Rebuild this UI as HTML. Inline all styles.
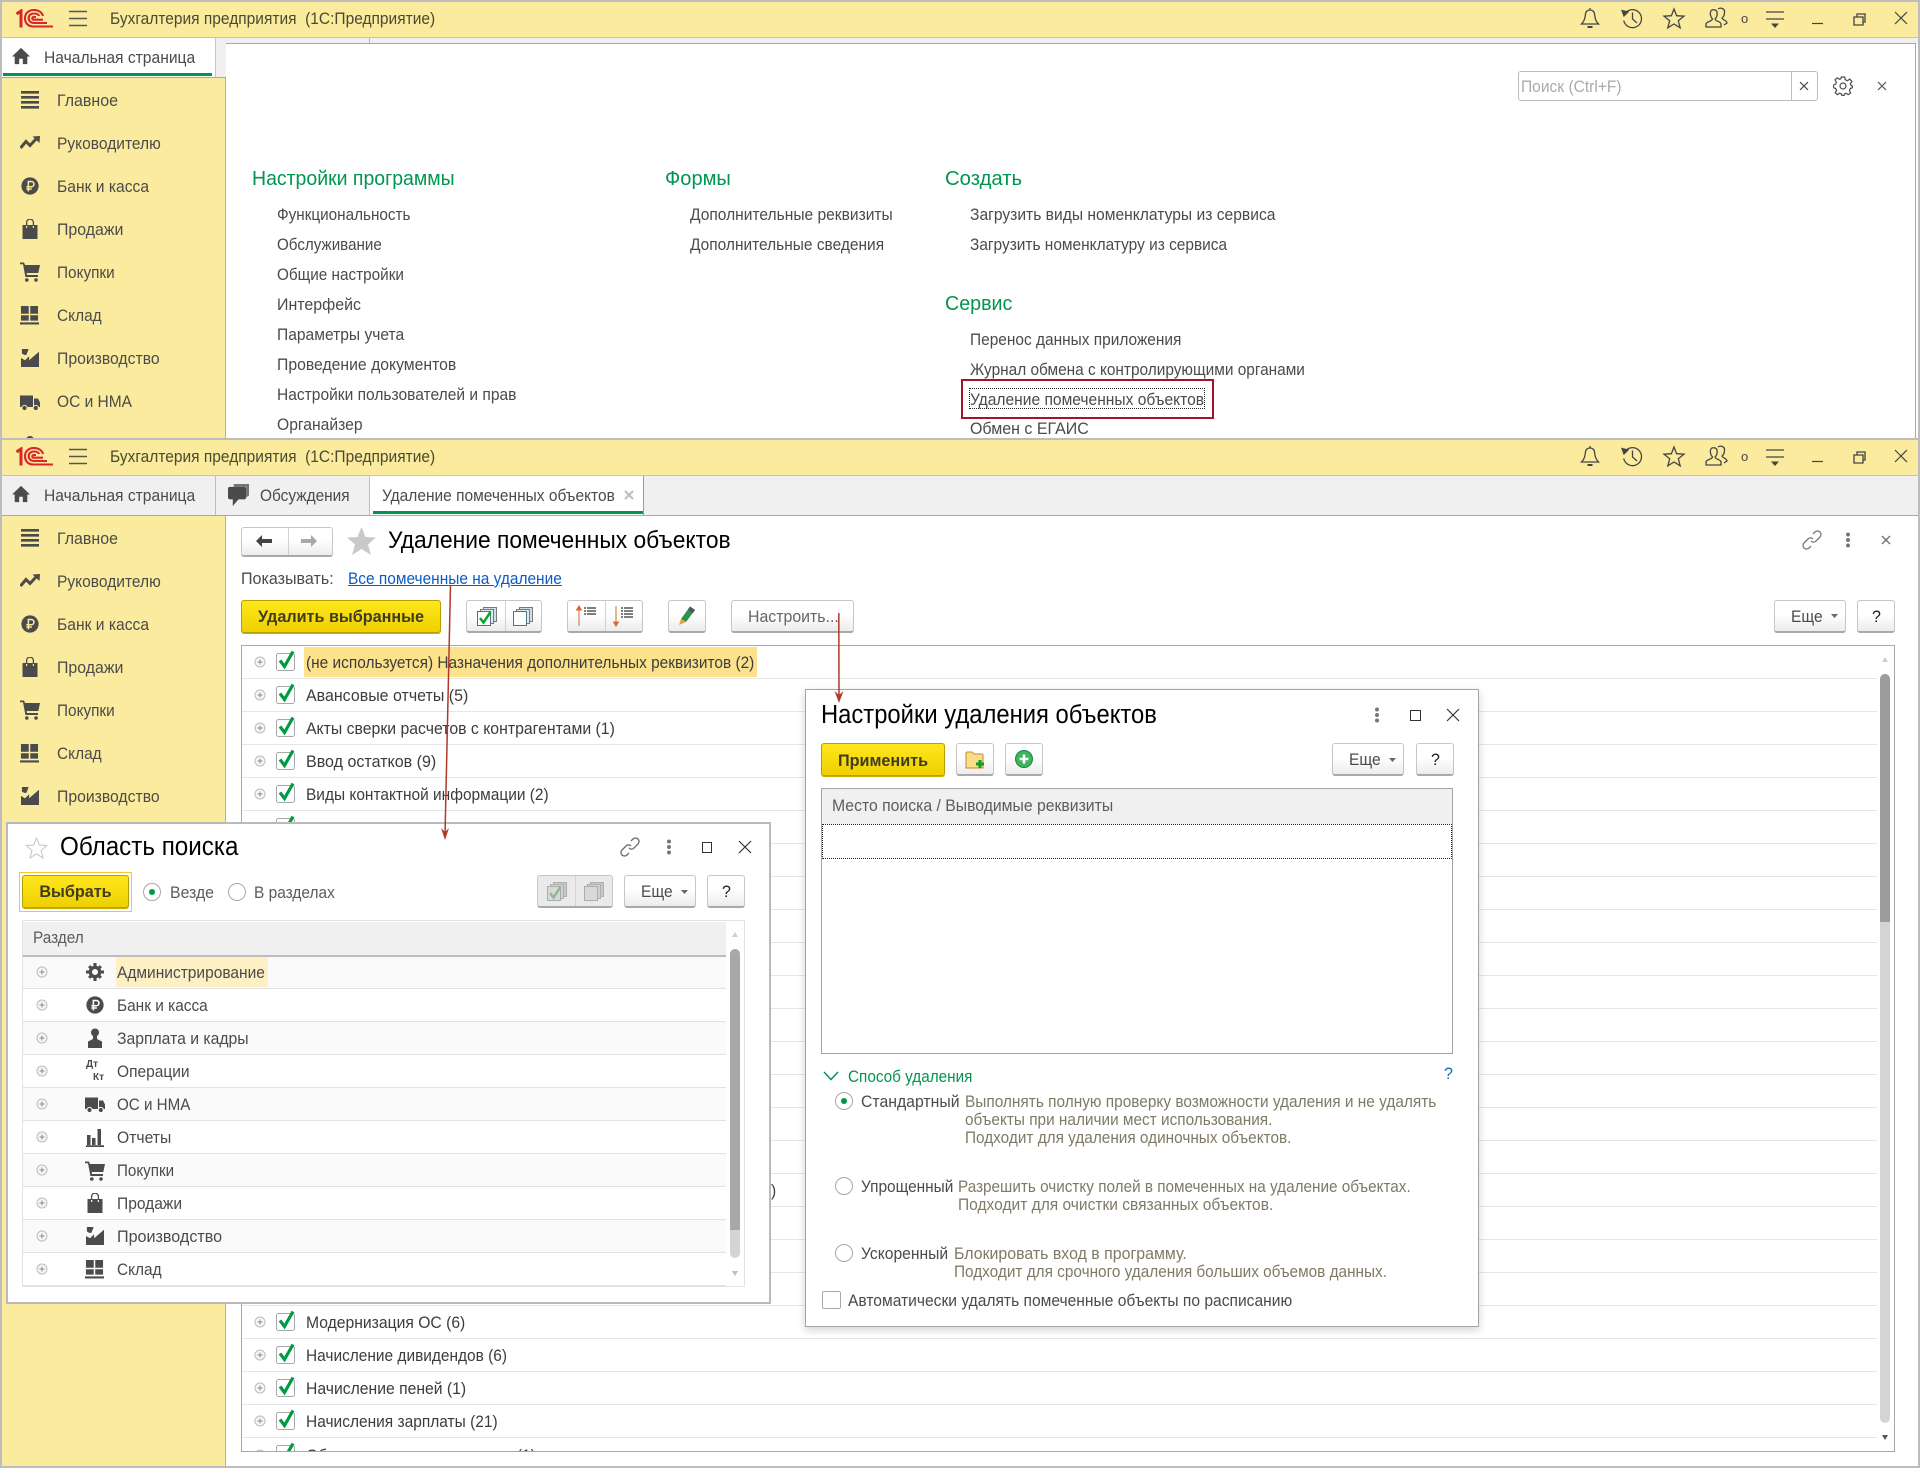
<!DOCTYPE html>
<html lang="ru"><head><meta charset="utf-8"><title>Удаление помеченных объектов</title>
<style>
*{box-sizing:border-box}
html,body{margin:0;padding:0;background:#fff}
body{width:1920px;height:1482px;position:relative;overflow:hidden;font-family:"Liberation Sans",Arial,sans-serif}
.a{position:absolute}
.t{position:absolute;white-space:nowrap;line-height:20px;font-size:16.5px;color:#4b4b4b;margin-top:1px;transform:scaleX(var(--k,.943));transform-origin:left center}
.r{color:#3c3c3c}
.h{font-size:20.5px;line-height:24px;color:#00964f;margin-top:1px;--k:.95}
.ttl{font-size:25.5px;line-height:30px;color:#000;margin-top:0;--k:.94}
.d{color:#7f7a66}
.l{margin-top:0}
.i{position:absolute;width:20px;height:20px;color:#4b4b4b;fill:currentColor}
.b{position:absolute;border:1px solid #c6c6c6;border-bottom:2px solid #a9a9a9;border-radius:3px;background:linear-gradient(#fff 45%,#ececec)}
.y{position:absolute;border:1px solid #b4a000;border-radius:3px;background:linear-gradient(#ffe71c,#efd000);box-shadow:0 1px 0 #c9b000}
.yt{position:absolute;width:100%;text-align:center;font-weight:bold;font-size:16.2px;line-height:20px;color:#403c20;white-space:nowrap}
.bar{position:absolute;left:2px;right:2px;height:36px;background:#fbeb9e;border-bottom:1px solid #d5c878}
.rad{position:absolute;width:18px;height:18px;border:1px solid #a8a8a8;border-radius:50%;background:#fff}
.rad.on:after{content:"";position:absolute;left:5px;top:5px;width:6px;height:6px;border-radius:50%;background:#00964f}
.ln{position:absolute;height:1px;background:#e6e6e6}
</style></head><body>

<svg width="0" height="0" style="position:absolute">
<defs>
<symbol id="logo" viewBox="0 0 38 19"><g fill="none" stroke="#d9262c" stroke-width="2.1"><path d="M1.500 5 L6 2 V18.500" stroke-width="3"/><path d="M28 7 C27 3 23 1 19 1 C13 1 10 5 10 9 C10 14 13 17.500 18 17.500 H38"/><path d="M24 7 C23.500 5 21.500 4.500 19 4.500 C15.500 4.500 13.700 6.500 13.700 9 C13.700 12 16 14 19 14 H32"/><path d="M21 8 H19 C18 8 17.300 8.500 17.300 9.500 C17.300 10.300 18 10.700 19 10.700 H28"/></g></symbol>
<symbol id="home" viewBox="0 0 20 20"><path d="M10 1 L20 10.500 H17 V19 H12 V13 H8 V19 H3 V10.500 H0Z"/></symbol>
<symbol id="chat" viewBox="0 0 22 24"><path d="M6 0 H22 V12 L19 14 V3 H6Z" opacity=".75"/><path d="M2 3 H17 Q19 3 19 5 V14 Q19 16 17 16 H11 L5 23 V16 H2 Q0 16 0 14 V5 Q0 3 2 3Z"/></symbol>
<symbol id="list" viewBox="0 0 20 20"><path d="M1 1h18v2.600H1zM1 6h18v2.600H1zM1 11h18v2.600H1zM1 16h18v2.600H1z"/></symbol>
<symbol id="trend" viewBox="0 0 20 20"><path d="M0.500 15 L6 8.500 L10 12.500 L16 6" fill="none" stroke="currentColor" stroke-width="3"/><path d="M12.500 3.500 L20 3 L19.500 10Z"/></symbol>
<symbol id="rub" viewBox="0 0 20 20"><circle cx="10" cy="10" r="9.600"/><path d="M8.200 16 V5 H11.500 A2.900 2.900 0 0 1 11.500 10.800 H6 M6 13.300 H12" fill="none" stroke="#fbeb9e" stroke-width="1.700"/></symbol>
<symbol id="rubw" viewBox="0 0 20 20"><circle cx="10" cy="10" r="9.600"/><path d="M8.200 16 V5 H11.500 A2.900 2.900 0 0 1 11.500 10.800 H6 M6 13.300 H12" fill="none" stroke="#fff" stroke-width="1.700"/></symbol>
<symbol id="bag" viewBox="0 0 20 20"><path d="M2.500 6 H6 V9 H7.200 V6 H12.800 V9 H14 V6 H17.500 V20 H2.500Z"/><path d="M6.600 7 V3.500 A3.400 3.400 0 0 1 13.400 3.500 V7" fill="none" stroke="currentColor" stroke-width="1.300"/></symbol>
<symbol id="cart" viewBox="0 0 20 20"><path d="M0 0.500 H4 L5 3 H20 L18.300 11 H6.700 L7 13 H18 V15 H5.400 L3 2.200 H0Z"/><circle cx="6.800" cy="18" r="1.800"/><circle cx="16" cy="18" r="1.800"/></symbol>
<symbol id="wh" viewBox="0 0 20 20"><path d="M1 0h8.200v8.200H1zM10.800 0H19v8.200h-8.200zM1 9.800h8.200v5.600H1zM10.800 9.800H19v5.600h-8.200zM0 17.300h20V19.500H0z"/></symbol>
<symbol id="fact" viewBox="0 0 20 20"><path d="M1 0h7.500L6 6.500H3.500L1 5zM0 20V10L4.500 12.500 9 8v4.500L20 3v17z"/></symbol>
<symbol id="truck" viewBox="0 0 20 20"><path d="M0 3.500H13V15H0ZM14 6.500H18L20 10.500V15H14Z"/><circle cx="4.500" cy="16" r="2.600" stroke="#fbeb9e"/><circle cx="15.800" cy="16" r="2.600" stroke="#fbeb9e"/></symbol>
<symbol id="truckw" viewBox="0 0 20 20"><path d="M0 3.500H13V15H0ZM14 6.500H18L20 10.500V15H14Z"/><circle cx="4.500" cy="16" r="2.600" stroke="#fff"/><circle cx="15.800" cy="16" r="2.600" stroke="#fff"/></symbol>
<symbol id="gear" viewBox="0 0 20 20"><circle cx="10" cy="10" r="5.200" fill="none" stroke="currentColor" stroke-width="3.600"/><path d="M8.300 0h3.400v4H8.300zM8.300 16h3.400v4H8.300zM0 8.300h4v3.400H0zM16 8.300h4v3.400h-4zM2.300 4.700 4.700 2.300l2.600 2.600-2.400 2.400zM15.300 2.300l2.400 2.400-2.600 2.600-2.400-2.400zM2.300 15.300l2.600-2.600 2.400 2.400-2.600 2.600zM15.100 12.700l2.600 2.600-2.400 2.400-2.600-2.600z"/></symbol>
<symbol id="user" viewBox="0 0 20 20"><circle cx="10" cy="4.500" r="4"/><path d="M8 8H12V11L17 13.500V20H3V13.500L8 11Z"/></symbol>
<symbol id="rep" viewBox="0 0 20 20"><path d="M2 8h3.500v10H2zM7 11h3.500v7H7zM12.500 2H16v16h-3.500zM1 18.200h18V20H1z"/></symbol>
<symbol id="plus" viewBox="0 0 12 12"><circle cx="6" cy="6" r="5" fill="#f6f6f6" stroke="#bcbcbc"/><path d="M3.500 6h5M6 3.500v5" stroke="#8c8c8c" stroke-width="1"/></symbol>
<symbol id="chk" viewBox="0 0 20 24"><rect x="0.500" y="5.500" width="18" height="17" rx="2" fill="#fff" stroke="#a8a8a8"/><path d="M4 12.500 L8.500 18.500 L17 3.500" fill="none" stroke="#009a44" stroke-width="3.200"/></symbol>
<symbol id="tb" viewBox="0 0 340 36">
 <g fill="none" stroke="#444" stroke-width="1.300">
  <path d="M15 10 C11.500 10 10.500 12.500 10.300 15 C10 19.500 8.500 22 6.500 24 H23.500 C21.500 22 20 19.500 19.700 15 C19.500 12.500 18.500 10 15 10Z M15 8 V10"/>
  <path d="M12.500 27 H17.500" stroke-width="2"/>
  <path d="M50.500 13 A9 9 0 1 1 48.700 20.500 M57.500 12.500 V19 L62 23"/>
  <path d="M47 10.500 L49 16 L53 12Z" fill="#444"/>
  <path d="M99 9 L101.600 15.700 L109 16.200 L103.300 20.800 L105.200 27.800 L99 24 L92.800 27.800 L94.700 20.800 L89 16.200 L96.400 15.700Z"/>
  <g transform="translate(0,1)">
  <path d="M131 26 V23 C131 20.500 137 20.500 137.500 18 C135.500 16 135 13 135.500 11 C136 8 141 8 142 11 C142.500 13 142 16.500 140 18 C140.500 20.500 146 20.500 146 23 V26Z"/>
  <path d="M143 8 C146 6 150 8 149.500 11 C149.500 14 148.500 16 147 17 C147.500 19 152 19.500 152 22 L149 24"/>
  </g>
  <path d="M191 12 H209 M191 19 H209"/>
  <path d="M237 23.500 H248" stroke-width="1.200"/>
  <path d="M279 17 H288 V25 H279Z M282 17 V14 H290 V22 H288"/>
  <path d="M320 12 L332 24 M332 12 L320 24" stroke-width="1.200"/>
 </g>
 <path d="M196 23.500 H204 L200 28Z" fill="#444"/>
</symbol>
<symbol id="ck" viewBox="0 0 26 28"><rect x="9.500" y="1.500" width="13" height="14" fill="#cfdde5" stroke="#7a7a7a"/><rect x="6.500" y="3.500" width="13" height="14" fill="#dfe9ef" stroke="#7a7a7a"/><rect x="3.500" y="5.500" width="13" height="14" fill="#fff" stroke="#4f7385"/></symbol>
<symbol id="ckd" viewBox="0 0 26 28"><rect x="9.500" y="1.500" width="13" height="14" fill="#c6c9ca" stroke="#b0b0b0"/><rect x="6.500" y="3.500" width="13" height="14" fill="#cfd2d3" stroke="#b0b0b0"/><rect x="3.500" y="5.500" width="13" height="14" fill="#d8dada" stroke="#a8aeb0"/></symbol>
<symbol id="link" viewBox="0 0 20 20"><g fill="none" stroke="currentColor" stroke-width="1.300"><path d="M11 4 L13 2 A3.500 3.500 0 0 1 18 7 L13.500 11.500 A3.500 3.500 0 0 1 9 11"/><path d="M9 16 L7 18 A3.500 3.500 0 0 1 2 13 L6.500 8.500 A3.500 3.500 0 0 1 11 9"/></g></symbol>
</defs>
</svg>

<!-- window 1 -->
<div class="a" style="left:0;top:0;width:1920px;height:438px;overflow:hidden">
 <div class="a" style="left:0;top:0;width:1920px;height:2px;background:#bdbdbd"></div>
 <div class="a" style="left:0;top:0;width:2px;height:438px;background:#bdbdbd"></div>
 <div class="a" style="left:1918px;top:0;width:2px;height:438px;background:#bdbdbd"></div>
 <div class="bar" style="top:2px"></div>
 <svg class="a" style="left:15px;top:9px" width="38" height="19"><use href="#logo"/></svg>
 <svg class="a" style="left:69px;top:10px" width="18" height="17"><path d="M0 1.500H18M0 8.500H18M0 15.500H18" stroke="#555" stroke-width="1.400"/></svg>
 <div class="t" style="left:110px;top:8px;color:#4a4a30;--k:.94">Бухгалтерия предприятия&nbsp; (1С:Предприятие)</div>
 <svg class="a" style="left:1575px;top:0" width="340" height="36"><use href="#tb"/></svg>
 <div class="t" style="left:1741px;top:8px;font-size:13px;color:#444;--k:1">о</div>

 <div class="a" style="left:2px;top:38px;width:1916px;height:6px;background:#f0f0f0"></div>
 <div class="a" style="left:369px;top:38px;width:1px;height:6px;background:#b8b8b8"></div>
 <div class="a" style="left:2px;top:38px;width:213px;height:40px;background:#fff"></div>
 <div class="a" style="left:215px;top:38px;width:11px;height:40px;background:#f0f0f0;border-left:1px solid #c4c4c4"></div>
 <div class="a" style="left:3px;top:73px;width:209px;height:2.500px;background:#00964f"></div>
 <div class="a" style="left:2px;top:77px;width:224px;height:1px;background:#a8a8a8"></div>
 <svg class="i" style="left:12px;top:47px;width:18px;height:18px"><use href="#home"/></svg>
 <div class="t" style="left:44px;top:47px;--k:.947">Начальная страница</div>

 <div class="a" style="left:2px;top:78px;width:224px;height:360px;background:#fbeb9e;border-right:1px solid #b4b09a"></div>
 <svg class="i" style="left:20px;top:90px"><use href="#list"/></svg><div class="t" style="left:57px;top:90px;--k:.967">Главное</div>
 <svg class="i" style="left:20px;top:133px"><use href="#trend"/></svg><div class="t" style="left:57px;top:133px">Руководителю</div>
 <svg class="i" style="left:21px;top:177px;width:18px;height:18px"><use href="#rub"/></svg><div class="t" style="left:57px;top:176px;--k:.947">Банк и касса</div>
 <svg class="i" style="left:20px;top:219px"><use href="#bag"/></svg><div class="t" style="left:57px;top:219px;--k:.963">Продажи</div>
 <svg class="i" style="left:20px;top:262px"><use href="#cart"/></svg><div class="t" style="left:57px;top:262px;--k:.93">Покупки</div>
 <svg class="i" style="left:20px;top:306px;height:19px;width:19px"><use href="#wh"/></svg><div class="t" style="left:57px;top:305px;--k:.935">Склад</div>
 <svg class="i" style="left:21px;top:349px;width:18px;height:18px"><use href="#fact"/></svg><div class="t" style="left:57px;top:348px;--k:.954">Производство</div>
 <svg class="i" style="left:20px;top:392px"><use href="#truck"/></svg><div class="t" style="left:57px;top:391px;--k:.94">ОС и НМА</div>
 <svg class="i" style="left:24px;top:434px;width:12px;height:12px"><circle cx="6" cy="6" r="4"/></svg>

 <div class="a" style="left:226px;top:43px;width:1690px;height:395px;background:#fff;border-top:1.500px solid #a8a8a8;border-right:1px solid #a8a8a8"></div>
 <div class="a" style="left:1518px;top:71px;width:300px;height:30px;border:1px solid #bdbdbd;border-radius:3px;background:#fff"></div>
 <div class="a" style="left:1791px;top:71px;width:1px;height:30px;background:#bdbdbd"></div>
 <div class="t" style="left:1521px;top:76px;color:#ababab">Поиск (Ctrl+F)</div>
 <svg class="a" style="left:1799px;top:81px" width="10" height="10"><path d="M1 1L9 9M9 1L1 9" stroke="#444" stroke-width="1.200"/></svg>
 <svg class="a" style="left:1833px;top:76px" width="20" height="20"><g fill="none" stroke="#4b4b4b" stroke-width="1.200"><circle cx="10" cy="10" r="3"/><path d="M8.300 1H11.700L12.200 3.700L14.500 4.700L16.800 3.100L18.900 5.500L17.300 7.700L18.200 9.300L19.500 10.300V11.700L17.300 12.500L16.500 14.600L17.500 17L15.200 18.700L13 17.200L11.500 18L11 19.500H9L8.500 18L6.500 17.200L4.500 18.700L2.200 16.700L3.500 14.500L2.700 12.500L0.500 11.700V9L2.700 8L3.300 6.200L2 3.800L4.300 1.900L6.500 3.300L8 2.700Z"/></g></svg>
 <svg class="a" style="left:1877px;top:81px" width="10" height="10"><path d="M1 1L9 9M9 1L1 9" stroke="#555" stroke-width="1.200"/></svg>

 <div class="t h" style="left:252px;top:166px">Настройки программы</div>
 <div class="t l" style="left:277px;top:205px;--k:.926">Функциональность</div>
 <div class="t l" style="left:277px;top:235px;--k:.92">Обслуживание</div>
 <div class="t l" style="left:277px;top:265px;--k:.927">Общие настройки</div>
 <div class="t l" style="left:277px;top:295px;--k:.966">Интерфейс</div>
 <div class="t l" style="left:277px;top:325px;--k:.945">Параметры учета</div>
 <div class="t l" style="left:277px;top:355px;--k:.955">Проведение документов</div>
 <div class="t l" style="left:277px;top:385px;--k:.943">Настройки пользователей и прав</div>
 <div class="t l" style="left:277px;top:415px;--k:.95">Органайзер</div>

 <div class="t h" style="left:665px;top:166px;--k:.98">Формы</div>
 <div class="t l" style="left:690px;top:205px">Дополнительные реквизиты</div>
 <div class="t l" style="left:690px;top:235px;--k:.938">Дополнительные сведения</div>

 <div class="t h" style="left:945px;top:166px;--k:.99">Создать</div>
 <div class="t l" style="left:970px;top:205px;--k:.947">Загрузить виды номенклатуры из сервиса</div>
 <div class="t l" style="left:970px;top:235px;--k:.936">Загрузить номенклатуру из сервиса</div>
 <div class="t h" style="left:945px;top:291px;--k:.96">Сервис</div>
 <div class="t l" style="left:970px;top:330px;--k:.936">Перенос данных приложения</div>
 <div class="t l" style="left:970px;top:360px;--k:.933">Журнал обмена с контролирующими органами</div>
 <div class="t l" style="left:970px;top:390px;--k:.944">Удаление помеченных объектов</div>
 <div class="t l" style="left:970px;top:419px;--k:.969">Обмен с ЕГАИС</div>
 <div class="a" style="left:961px;top:379px;width:253px;height:40px;border:2px solid #a3142a"></div>
 <div class="a" style="left:969px;top:388px;width:236px;height:21px;border:1px dotted #222"></div>
</div>
<div class="a" style="left:0;top:438px;width:1920px;height:2px;background:#bdbdbd"></div>

<!-- window 2 -->
<div class="a" style="left:0;top:440px;width:1920px;height:1028px;overflow:hidden;background:#fff">
 <div class="a" style="left:0;top:0;width:2px;height:1028px;background:#bdbdbd"></div>
 <div class="a" style="left:1918px;top:0;width:2px;height:1028px;background:#bdbdbd"></div>
 <div class="a" style="left:0;top:1026px;width:1920px;height:2px;background:#bdbdbd"></div>
</div>
<div class="bar" style="top:440px"></div>
<svg class="a" style="left:15px;top:447px" width="38" height="19"><use href="#logo"/></svg>
<svg class="a" style="left:69px;top:448px" width="18" height="17"><path d="M0 1.500H18M0 8.500H18M0 15.500H18" stroke="#555" stroke-width="1.400"/></svg>
<div class="t" style="left:110px;top:446px;color:#4a4a30;--k:.94">Бухгалтерия предприятия&nbsp; (1С:Предприятие)</div>
<svg class="a" style="left:1575px;top:438px" width="340" height="36"><use href="#tb"/></svg>
<div class="t" style="left:1741px;top:446px;font-size:13px;color:#444;--k:1">о</div>

<div class="a" style="left:2px;top:476px;width:1916px;height:40px;background:#f0f0f0;border-bottom:1px solid #a8a8a8"></div>
<div class="a" style="left:215px;top:476px;width:1px;height:39px;background:#bdbdbd"></div>
<div class="a" style="left:369px;top:476px;width:1px;height:39px;background:#bdbdbd"></div>
<div class="a" style="left:370px;top:476px;width:273px;height:39px;background:#fff"></div>
<div class="a" style="left:643px;top:476px;width:1px;height:39px;background:#9a9a9a"></div>
<div class="a" style="left:373px;top:511px;width:270px;height:2.500px;background:#00964f"></div>
<svg class="i" style="left:12px;top:485px;width:18px;height:18px"><use href="#home"/></svg>
<div class="t" style="left:44px;top:485px;--k:.947">Начальная страница</div>
<svg class="i" style="left:228px;top:484px;width:21px;height:23px"><use href="#chat"/></svg>
<div class="t" style="left:260px;top:485px;--k:.935">Обсуждения</div>
<div class="t" style="left:382px;top:485px;--k:.939">Удаление помеченных объектов</div>
<svg class="a" style="left:624px;top:490px" width="10" height="10"><path d="M1 1L9 9M9 1L1 9" stroke="#bdbdbd" stroke-width="2"/></svg>

<div class="a" style="left:2px;top:516px;width:224px;height:950px;background:#fbeb9e;border-right:1px solid #b4b09a"></div>
<svg class="i" style="left:20px;top:528px"><use href="#list"/></svg><div class="t" style="left:57px;top:528px;--k:.967">Главное</div>
<svg class="i" style="left:20px;top:571px"><use href="#trend"/></svg><div class="t" style="left:57px;top:571px">Руководителю</div>
<svg class="i" style="left:21px;top:615px;width:18px;height:18px"><use href="#rub"/></svg><div class="t" style="left:57px;top:614px;--k:.947">Банк и касса</div>
<svg class="i" style="left:20px;top:657px"><use href="#bag"/></svg><div class="t" style="left:57px;top:657px;--k:.963">Продажи</div>
<svg class="i" style="left:20px;top:700px"><use href="#cart"/></svg><div class="t" style="left:57px;top:700px;--k:.93">Покупки</div>
<svg class="i" style="left:20px;top:744px;width:19px;height:19px"><use href="#wh"/></svg><div class="t" style="left:57px;top:743px;--k:.935">Склад</div>
<svg class="i" style="left:21px;top:787px;width:18px;height:18px"><use href="#fact"/></svg><div class="t" style="left:57px;top:786px;--k:.954">Производство</div>

<!-- main content -->
<div class="b" style="left:241px;top:527px;width:92px;height:30px"></div>
<div class="a" style="left:288px;top:528px;width:1px;height:27px;background:#d0d0d0"></div>
<svg class="a" style="left:255px;top:534px" width="18" height="14"><path d="M7 1L1 7L7 13V9H17V5H7Z" fill="#444"/></svg>
<svg class="a" style="left:300px;top:534px" width="18" height="14"><path d="M11 1L17 7L11 13V9H1V5H11Z" fill="#a8a8a8"/></svg>
<svg class="a" style="left:346px;top:526px" width="31" height="30"><path d="M15.500 1L19.500 11L30 11.500L22 18.500L25 29L15.500 23L6 29L9 18.500L1 11.500L11.500 11Z" fill="#c9c9c9"/></svg>
<div class="t ttl" style="left:388px;top:526px;font-size:24px;--k:.95">Удаление помеченных объектов</div>
<svg class="a" style="left:1802px;top:530px;color:#7a7a7a" width="20" height="20"><use href="#link"/></svg>
<svg class="a" style="left:1845px;top:532px" width="6" height="16"><circle cx="3" cy="2.500" r="2" fill="#777"/><circle cx="3" cy="8" r="2" fill="#777"/><circle cx="3" cy="13.500" r="2" fill="#777"/></svg>
<svg class="a" style="left:1881px;top:535px" width="10" height="10"><path d="M1 1L9 9M9 1L1 9" stroke="#777" stroke-width="1.500"/></svg>

<div class="t" style="left:241px;top:568px;--k:.974">Показывать:</div>
<div class="t" style="left:348px;top:568px;color:#0f5cc0;text-decoration:underline;--k:.936">Все помеченные на удаление</div>

<div class="y" style="left:241px;top:600px;width:200px;height:33px"><div class="yt" style="top:6px">Удалить выбранные</div></div>
<div class="b" style="left:466px;top:600px;width:76px;height:33px"></div>
<div class="a" style="left:505px;top:601px;width:1px;height:30px;background:#d0d0d0"></div>
<svg class="a" style="left:474px;top:606px" width="26" height="28"><use href="#ck"/><path d="M6 12L9.500 16.500L16.500 6" fill="none" stroke="#12a12e" stroke-width="2.500"/></svg>
<svg class="a" style="left:510px;top:606px" width="26" height="28"><use href="#ck"/></svg>
<div class="b" style="left:567px;top:600px;width:76px;height:33px"></div>
<div class="a" style="left:605px;top:601px;width:1px;height:30px;background:#d0d0d0"></div>
<svg class="a" style="left:576px;top:605px" width="24" height="22"><path d="M3 21V3M0.500 5L3 1L5.500 5Z" stroke="#d96a2a" fill="#d96a2a" stroke-width="1"/><path d="M8 3h12M8 6h12M8 9h12" stroke="#555" stroke-width="1.500" stroke-dasharray="2 1 9 0"/></svg>
<svg class="a" style="left:613px;top:605px" width="24" height="22"><path d="M3 1V19M0.500 17L3 21L5.500 17Z" stroke="#d96a2a" fill="#d96a2a" stroke-width="1"/><path d="M8 3h12M8 6h12M8 9h12M8 12h12" stroke="#555" stroke-width="1.500" stroke-dasharray="2 1 9 0"/></svg>
<div class="b" style="left:668px;top:600px;width:38px;height:33px"></div>
<svg class="a" style="left:678px;top:605px" width="18" height="21"><path d="M12 1.500L17 5L8 17L3 14Z" fill="#2f8f4e"/><path d="M12 1.500L17 5L15 8L10 4.500Z" fill="#555"/><path d="M3 14L8 17L1 20Z" fill="#e6a23c"/></svg>
<div class="b" style="left:731px;top:600px;width:123px;height:33px"></div>
<div class="t" style="left:748px;top:606px;color:#666;--k:.962">Настроить...</div>
<div class="b" style="left:1774px;top:600px;width:72px;height:33px"></div>
<div class="t" style="left:1791px;top:606px">Еще</div>
<svg class="a" style="left:1831px;top:614px" width="7" height="5"><path d="M0 0H7L3.500 4Z" fill="#666"/></svg>
<div class="b" style="left:1857px;top:600px;width:38px;height:33px"></div>
<div class="t" style="left:1872px;top:606px;color:#222;font-size:17px">?</div>

<!-- main table -->
<div class="a" style="left:241px;top:645px;width:1654px;height:807px;border:1px solid #a8a8a8;background:#fff"></div>
<div class="ln" style="left:242px;top:678px;width:1635px"></div>
<div class="ln" style="left:242px;top:711px;width:1635px"></div>
<div class="ln" style="left:242px;top:744px;width:1635px"></div>
<div class="ln" style="left:242px;top:777px;width:1635px"></div>
<div class="ln" style="left:242px;top:810px;width:1635px"></div>
<div class="ln" style="left:242px;top:843px;width:1635px"></div>
<div class="ln" style="left:242px;top:876px;width:1635px"></div>
<div class="ln" style="left:242px;top:909px;width:1635px"></div>
<div class="ln" style="left:242px;top:942px;width:1635px"></div>
<div class="ln" style="left:242px;top:975px;width:1635px"></div>
<div class="ln" style="left:242px;top:1008px;width:1635px"></div>
<div class="ln" style="left:242px;top:1041px;width:1635px"></div>
<div class="ln" style="left:242px;top:1074px;width:1635px"></div>
<div class="ln" style="left:242px;top:1107px;width:1635px"></div>
<div class="ln" style="left:242px;top:1140px;width:1635px"></div>
<div class="ln" style="left:242px;top:1173px;width:1635px"></div>
<div class="ln" style="left:242px;top:1206px;width:1635px"></div>
<div class="ln" style="left:242px;top:1239px;width:1635px"></div>
<div class="ln" style="left:242px;top:1272px;width:1635px"></div>
<div class="ln" style="left:242px;top:1305px;width:1635px"></div>
<div class="ln" style="left:242px;top:1338px;width:1635px"></div>
<div class="ln" style="left:242px;top:1371px;width:1635px"></div>
<div class="ln" style="left:242px;top:1404px;width:1635px"></div>
<div class="ln" style="left:242px;top:1437px;width:1635px"></div>

<div class="a" style="left:304px;top:647px;width:453px;height:30px;background:#fde28c"></div>

<svg class="a" style="left:254px;top:656px" width="12" height="12"><use href="#plus"/></svg><svg class="a" style="left:276px;top:648px" width="20" height="24"><use href="#chk"/></svg><div class="t r" style="left:306px;top:652px;--k:.935">(не используется) Назначения дополнительных реквизитов (2)</div>
<svg class="a" style="left:254px;top:689px" width="12" height="12"><use href="#plus"/></svg><svg class="a" style="left:276px;top:681px" width="20" height="24"><use href="#chk"/></svg><div class="t r" style="left:306px;top:685px;--k:.968">Авансовые отчеты (5)</div>
<svg class="a" style="left:254px;top:722px" width="12" height="12"><use href="#plus"/></svg><svg class="a" style="left:276px;top:714px" width="20" height="24"><use href="#chk"/></svg><div class="t r" style="left:306px;top:718px;--k:.958">Акты сверки расчетов с контрагентами (1)</div>
<svg class="a" style="left:254px;top:755px" width="12" height="12"><use href="#plus"/></svg><svg class="a" style="left:276px;top:747px" width="20" height="24"><use href="#chk"/></svg><div class="t r" style="left:306px;top:751px;--k:.973">Ввод остатков (9)</div>
<svg class="a" style="left:254px;top:788px" width="12" height="12"><use href="#plus"/></svg><svg class="a" style="left:276px;top:780px" width="20" height="24"><use href="#chk"/></svg><div class="t r" style="left:306px;top:784px;--k:.937">Виды контактной информации (2)</div>
<svg class="a" style="left:276px;top:813px" width="20" height="24"><use href="#chk"/></svg>
<div class="t r" style="left:771px;top:1180px">)</div>
<svg class="a" style="left:254px;top:1316px" width="12" height="12"><use href="#plus"/></svg><svg class="a" style="left:276px;top:1308px" width="20" height="24"><use href="#chk"/></svg><div class="t r" style="left:306px;top:1312px;--k:.951">Модернизация ОС (6)</div>
<svg class="a" style="left:254px;top:1349px" width="12" height="12"><use href="#plus"/></svg><svg class="a" style="left:276px;top:1341px" width="20" height="24"><use href="#chk"/></svg><div class="t r" style="left:306px;top:1345px;--k:.936">Начисление дивидендов (6)</div>
<svg class="a" style="left:254px;top:1382px" width="12" height="12"><use href="#plus"/></svg><svg class="a" style="left:276px;top:1374px" width="20" height="24"><use href="#chk"/></svg><div class="t r" style="left:306px;top:1378px;--k:.953">Начисление пеней (1)</div>
<svg class="a" style="left:254px;top:1415px" width="12" height="12"><use href="#plus"/></svg><svg class="a" style="left:276px;top:1407px" width="20" height="24"><use href="#chk"/></svg><div class="t r" style="left:306px;top:1411px;--k:.939">Начисления зарплаты (21)</div>
<div class="a" style="left:242px;top:1438px;width:400px;height:13px;overflow:hidden">
 <svg class="a" style="left:12px;top:11px" width="12" height="12"><use href="#plus"/></svg><svg class="a" style="left:34px;top:2px" width="20" height="24"><use href="#chk"/></svg><div class="t r" style="left:64px;top:7px">Обесценение номенклатуры (1)</div>
</div>

<div class="a" style="left:1880px;top:674px;width:10px;height:749px;border-radius:5px;background:#d4d4d4"></div>
<div class="a" style="left:1880px;top:674px;width:10px;height:248px;border-radius:5px 5px 0 0;background:#9c9c9c"></div>
<svg class="a" style="left:1882px;top:657px" width="6" height="5"><path d="M3 0L6 5H0Z" fill="#cfcfcf"/></svg>
<svg class="a" style="left:1882px;top:1435px" width="6" height="5"><path d="M3 5L6 0H0Z" fill="#555"/></svg>

<!-- left dialog -->
<div class="a" style="left:6px;top:822px;width:765px;height:482px;background:#fff;border:2px solid #bababa"></div>
<svg class="a" style="left:25px;top:837px" width="23" height="22"><path d="M11.500 1L14.300 8L21.800 8.500L16 13.500L18 21L11.500 16.800L5 21L7 13.500L1.200 8.500L8.700 8Z" fill="none" stroke="#c4c4c4" stroke-width="1"/></svg>
<div class="t ttl" style="left:60px;top:832px;--k:.949">Область поиска</div>
<svg class="a" style="left:620px;top:837px;color:#6a6a6a" width="20" height="20"><use href="#link"/></svg>
<svg class="a" style="left:666px;top:839px" width="6" height="16"><circle cx="3" cy="2.500" r="2" fill="#777"/><circle cx="3" cy="8" r="2" fill="#777"/><circle cx="3" cy="13.500" r="2" fill="#777"/></svg>
<div class="a" style="left:702px;top:842px;width:10px;height:11px;border:1.500px solid #333"></div>
<svg class="a" style="left:738px;top:840px" width="14" height="14"><path d="M1 1L13 13M13 1L1 13" stroke="#333" stroke-width="1.200"/></svg>
<div class="a" style="left:19px;top:872px;width:113px;height:40px;border:1px solid #f3c92a"></div>
<div class="y" style="left:22px;top:875px;width:107px;height:33px"><div class="yt" style="top:6px">Выбрать</div></div>
<div class="rad on" style="left:143px;top:883px"></div>
<div class="t" style="left:170px;top:882px;color:#5c5c5c;--k:.96">Везде</div>
<div class="rad" style="left:228px;top:883px"></div>
<div class="t" style="left:254px;top:882px;color:#5c5c5c;--k:.937">В разделах</div>
<div class="b" style="left:537px;top:875px;width:76px;height:33px;background:#eaeaea"></div>
<div class="a" style="left:575px;top:876px;width:1px;height:30px;background:#d4d4d4"></div>
<svg class="a" style="left:544px;top:881px" width="26" height="28"><use href="#ckd"/><path d="M6 12L9.500 16.500L16.500 6" fill="none" stroke="#8fb896" stroke-width="2.500"/></svg>
<svg class="a" style="left:581px;top:881px" width="26" height="28"><use href="#ckd"/></svg>
<div class="b" style="left:624px;top:875px;width:72px;height:33px"></div>
<div class="t" style="left:641px;top:881px">Еще</div>
<svg class="a" style="left:681px;top:890px" width="7" height="5"><path d="M0 0H7L3.500 4Z" fill="#666"/></svg>
<div class="b" style="left:707px;top:875px;width:38px;height:33px"></div>
<div class="t" style="left:722px;top:881px;color:#222;font-size:17px">?</div>

<div class="a" style="left:22px;top:920px;width:723px;height:367px;border:1px solid #e2e2e2"></div>
<div class="a" style="left:23px;top:922px;width:703px;height:33px;background:#f0f0f0"></div>
<div class="a" style="left:23px;top:955px;width:703px;height:1.500px;background:#bdbdbd"></div>
<div class="t" style="left:33px;top:927px;color:#5c5c5c;--k:.93">Раздел</div>
<div class="a" style="left:23px;top:957px;width:703px;height:31px;background:#fafafa"></div>
<div class="a" style="left:23px;top:1022px;width:703px;height:32px;background:#fafafa"></div>
<div class="a" style="left:23px;top:1088px;width:703px;height:32px;background:#fafafa"></div>
<div class="a" style="left:23px;top:1154px;width:703px;height:32px;background:#fafafa"></div>
<div class="a" style="left:23px;top:1220px;width:703px;height:32px;background:#fafafa"></div>
<div class="a" style="left:116px;top:957px;width:152px;height:30px;background:#fdf0c4"></div>
<div class="ln" style="left:23px;top:988px;width:703px;background:#e2e2e2"></div>
<div class="ln" style="left:23px;top:1021px;width:703px;background:#e2e2e2"></div>
<div class="ln" style="left:23px;top:1054px;width:703px;background:#e2e2e2"></div>
<div class="ln" style="left:23px;top:1087px;width:703px;background:#e2e2e2"></div>
<div class="ln" style="left:23px;top:1120px;width:703px;background:#e2e2e2"></div>
<div class="ln" style="left:23px;top:1153px;width:703px;background:#e2e2e2"></div>
<div class="ln" style="left:23px;top:1186px;width:703px;background:#e2e2e2"></div>
<div class="ln" style="left:23px;top:1219px;width:703px;background:#e2e2e2"></div>
<div class="ln" style="left:23px;top:1252px;width:703px;background:#e2e2e2"></div>
<div class="ln" style="left:23px;top:1285px;width:703px;background:#e2e2e2"></div>

<svg class="a" style="left:36px;top:966px" width="12" height="12"><use href="#plus"/></svg><svg class="i" style="left:86px;top:963px;width:18px;height:18px"><use href="#gear"/></svg><div class="t" style="left:117px;top:962px;--k:.94">Администрирование</div>
<svg class="a" style="left:36px;top:999px" width="12" height="12"><use href="#plus"/></svg><svg class="i" style="left:86px;top:996px;width:18px;height:18px"><use href="#rubw"/></svg><div class="t" style="left:117px;top:995px;--k:.934">Банк и касса</div>
<svg class="a" style="left:36px;top:1032px" width="12" height="12"><use href="#plus"/></svg><svg class="i" style="left:85px;top:1028px"><use href="#user"/></svg><div class="t" style="left:117px;top:1028px;--k:.953">Зарплата и кадры</div>
<svg class="a" style="left:36px;top:1065px" width="12" height="12"><use href="#plus"/></svg><div class="t" style="left:86px;top:1058px;font-size:10px;font-weight:bold;line-height:12px;--k:1">Дт</div><div class="t" style="left:93px;top:1071px;font-size:10px;font-weight:bold;line-height:12px;--k:1">Кт</div><div class="t" style="left:117px;top:1061px;--k:.94">Операции</div>
<svg class="a" style="left:36px;top:1098px" width="12" height="12"><use href="#plus"/></svg><svg class="i" style="left:85px;top:1094px"><use href="#truckw"/></svg><div class="t" style="left:117px;top:1094px;--k:.92">ОС и НМА</div>
<svg class="a" style="left:36px;top:1131px" width="12" height="12"><use href="#plus"/></svg><svg class="i" style="left:85px;top:1127px"><use href="#rep"/></svg><div class="t" style="left:117px;top:1127px;--k:.951">Отчеты</div>
<svg class="a" style="left:36px;top:1164px" width="12" height="12"><use href="#plus"/></svg><svg class="i" style="left:85px;top:1161px"><use href="#cart"/></svg><div class="t" style="left:117px;top:1160px;--k:.92">Покупки</div>
<svg class="a" style="left:36px;top:1197px" width="12" height="12"><use href="#plus"/></svg><svg class="i" style="left:85px;top:1193px"><use href="#bag"/></svg><div class="t" style="left:117px;top:1193px;--k:.944">Продажи</div>
<svg class="a" style="left:36px;top:1230px" width="12" height="12"><use href="#plus"/></svg><svg class="i" style="left:86px;top:1227px;width:18px;height:18px"><use href="#fact"/></svg><div class="t" style="left:117px;top:1226px;--k:.977">Производство</div>
<svg class="a" style="left:36px;top:1263px" width="12" height="12"><use href="#plus"/></svg><svg class="i" style="left:85px;top:1260px;width:19px;height:19px"><use href="#wh"/></svg><div class="t" style="left:117px;top:1259px;--k:.934">Склад</div>

<div class="a" style="left:730px;top:949px;width:10px;height:309px;border-radius:5px;background:#d4d4d4"></div>
<div class="a" style="left:730px;top:949px;width:10px;height:281px;border-radius:5px 5px 0 0;background:#a8a8a8"></div>
<svg class="a" style="left:732px;top:932px" width="6" height="5"><path d="M3 0L6 5H0Z" fill="#cfcfcf"/></svg>
<svg class="a" style="left:732px;top:1271px" width="6" height="5"><path d="M3 5L6 0H0Z" fill="#bdbdbd"/></svg>

<!-- right dialog -->
<div class="a" style="left:805px;top:689px;width:674px;height:638px;background:#fff;border:1px solid #a4a4a4;box-shadow:0 3px 8px rgba(0,0,0,.18)"></div>
<div class="t ttl" style="left:821px;top:700px;--k:.933">Настройки удаления объектов</div>
<svg class="a" style="left:1374px;top:707px" width="6" height="16"><circle cx="3" cy="2.500" r="2" fill="#777"/><circle cx="3" cy="8" r="2" fill="#777"/><circle cx="3" cy="13.500" r="2" fill="#777"/></svg>
<div class="a" style="left:1410px;top:710px;width:11px;height:11px;border:1.500px solid #333"></div>
<svg class="a" style="left:1446px;top:708px" width="14" height="14"><path d="M1 1L13 13M13 1L1 13" stroke="#333" stroke-width="1.200"/></svg>
<div class="y" style="left:821px;top:743px;width:124px;height:33px"><div class="yt" style="top:6.500px">Применить</div></div>
<div class="b" style="left:956px;top:743px;width:38px;height:33px"></div>
<svg class="a" style="left:965px;top:751px" width="22" height="19"><path d="M1 2.500Q1 1 2.500 1H7L9 3H17Q18 3 18 4V17H1Z" fill="#fbdc8a" stroke="#c08a30"/><path d="M15 9v8M11 13h8" stroke="#10a020" stroke-width="3"/></svg>
<div class="b" style="left:1005px;top:743px;width:38px;height:33px"></div>
<svg class="a" style="left:1015px;top:750px" width="18" height="18"><circle cx="9" cy="9" r="8.500" fill="#3fb45f" stroke="#178a3a"/><path d="M9 4.500v9M4.500 9h9" stroke="#fff" stroke-width="2.600"/></svg>
<div class="b" style="left:1332px;top:743px;width:72px;height:33px"></div>
<div class="t" style="left:1349px;top:749px">Еще</div>
<svg class="a" style="left:1389px;top:758px" width="7" height="5"><path d="M0 0H7L3.500 4Z" fill="#666"/></svg>
<div class="b" style="left:1416px;top:743px;width:38px;height:33px"></div>
<div class="t" style="left:1431px;top:749px;color:#222;font-size:17px">?</div>
<div class="a" style="left:821px;top:788px;width:632px;height:266px;border:1px solid #a4a4a4;background:#fff"></div>
<div class="a" style="left:822px;top:789px;width:630px;height:35px;background:#f0f0f0"></div>
<div class="t l" style="left:832px;top:796px;color:#5c5c5c;--k:.955">Место поиска / Выводимые реквизиты</div>
<div class="a" style="left:822px;top:824px;width:630px;height:35px;border:1px dotted #222"></div>
<svg class="a" style="left:823px;top:1071px" width="16" height="10"><path d="M1 1L8 8.500L15 1" fill="none" stroke="#00964f" stroke-width="1.500"/></svg>
<div class="t" style="left:848px;top:1066px;color:#00964f;--k:.927">Способ удаления</div>
<div class="t" style="left:1444px;top:1063px;color:#0f72b8;font-size:17px">?</div>
<div class="rad on" style="left:835px;top:1092px"></div>
<div class="t" style="left:861px;top:1091px;--k:.957">Стандартный</div>
<div class="t d" style="left:965px;top:1091px;--k:.934">Выполнять полную проверку возможности удаления и не удалять</div>
<div class="t d" style="left:965px;top:1109px;--k:.931">объекты при наличии мест использования.</div>
<div class="t d" style="left:965px;top:1127px;--k:.93">Подходит для удаления одиночных объектов.</div>
<div class="rad" style="left:835px;top:1177px"></div>
<div class="t" style="left:861px;top:1176px;--k:.934">Упрощенный</div>
<div class="t d" style="left:958px;top:1176px;--k:.927">Разрешить очистку полей в помеченных на удаление объектах.</div>
<div class="t d" style="left:958px;top:1194px;--k:.942">Подходит для очистки связанных объектов.</div>
<div class="rad" style="left:835px;top:1244px"></div>
<div class="t" style="left:861px;top:1243px;--k:.949">Ускоренный</div>
<div class="t d" style="left:954px;top:1243px;--k:.964">Блокировать вход в программу.</div>
<div class="t d" style="left:954px;top:1261px;--k:.93">Подходит для срочного удаления больших объемов данных.</div>
<div class="a" style="left:822px;top:1291px;width:19px;height:18px;border:1px solid #a8a8a8;border-radius:2px;background:#fff"></div>
<div class="t" style="left:848px;top:1290px;--k:.945">Автоматически удалять помеченные объекты по расписанию</div>

<!-- arrows -->
<svg class="a" style="left:0;top:0;pointer-events:none" width="1920" height="1482">
 <path d="M450.500 585 L445 836" stroke="#b0392b" stroke-width="1.500" fill="none"/>
 <path d="M441 828 L445 840 L449 828 L445 832Z" fill="#b0392b"/>
 <path d="M838.800 613 L839 698" stroke="#b0392b" stroke-width="1.500" fill="none"/>
 <path d="M834.500 691 L839 703 L843.500 691 L839 695Z" fill="#b0392b"/>
</svg>
</body></html>
